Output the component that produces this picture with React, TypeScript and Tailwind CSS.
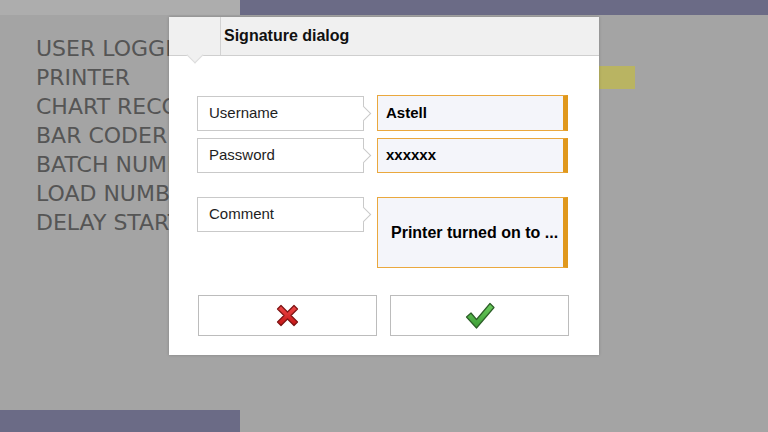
import React from "react";

// --- Background menu rows (partly hidden by the dialog) ---
const MENU_ITEMS = [
  "USER LOGGED IN",
  "PRINTER",
  "CHART RECORDER",
  "BAR CODER",
  "BATCH NUMBER",
  "LOAD NUMBER",
  "DELAY START",
];

function CancelIcon() {
  return (
    <svg width="27" height="27" viewBox="0 0 27 27">
      <defs>
        <linearGradient id="xg" x1="0" y1="0" x2="0" y2="1">
          <stop offset="0" stopColor="#ef4a4a" />
          <stop offset="1" stopColor="#c41414" />
        </linearGradient>
      </defs>
      <path
        d="M3.5 7 L7 3.5 L13.5 10 L20 3.5 L23.5 7 L17 13.5 L23.5 20 L20 23.5 L13.5 17 L7 23.5 L3.5 20 L10 13.5 Z"
        fill="url(#xg)"
        stroke="#7d1212"
        strokeWidth="1.2"
        strokeLinejoin="round"
      />
    </svg>
  );
}

function OkIcon() {
  return (
    <svg width="30" height="28" viewBox="0 0 30 28">
      <defs>
        <linearGradient id="cg" x1="0" y1="0" x2="0" y2="1">
          <stop offset="0" stopColor="#6ccd5e" />
          <stop offset="1" stopColor="#3c9c36" />
        </linearGradient>
      </defs>
      <path
        d="M1.5 15 L6 11 L11.5 17.5 L25 1.5 L29 5.5 L11.5 26 Z"
        fill="url(#cg)"
        stroke="#2c5e28"
        strokeWidth="1.2"
        strokeLinejoin="round"
      />
    </svg>
  );
}

function FieldLabel({ text }: { text: string }) {
  return (
    <div className="relative flex h-[35px] w-[167px] shrink-0 items-center border border-[#c9c9c9] bg-white pl-[11px] text-[15px] text-[#1e1e1e]">
      {text}
      {/* pointer towards the value box */}
      <div className="absolute right-[-6px] top-[11px] h-[11px] w-[11px] rotate-45 border-r border-t border-[#c9c9c9] bg-white" />
    </div>
  );
}

export default function App() {
  return (
    <div
      className="relative flex h-[432px] w-[768px] flex-col overflow-hidden bg-[#a4a4a4]"
      style={{ fontFamily: '"Liberation Sans", Arial, sans-serif' }}
    >
      {/* Top bar */}
      <div className="flex h-[15px] shrink-0">
        <div className="w-[240px] bg-[#adadad]" />
        <div className="flex-1 bg-[#6b6b86]" />
      </div>

      {/* Background list */}
      <div className="flex-1 pl-[36px] pt-[19px]">
        {MENU_ITEMS.map((item) => (
          <div key={item} className="flex h-[29px] items-center">
            <div className="w-[133px] overflow-hidden">
              <span
                className="whitespace-nowrap text-[22px] leading-[29px] text-[#555555]"
                style={{ fontFamily: '"DejaVu Sans", sans-serif' }}
              >
                {item}
              </span>
            </div>
            <div className="w-[430px]" />
            {item === "PRINTER" && <div className="h-[23px] w-[36px] bg-[#b9b462]" />}
          </div>
        ))}
      </div>

      {/* Bottom bar */}
      <div className="h-[22px] w-[240px] shrink-0 bg-[#6b6b86]" />

      {/* Signature dialog */}
      <div className="absolute left-[169px] top-[17px] h-[338px] w-[430px] bg-white shadow-[0_0_3px_rgba(0,0,0,0.2)]">
        <div className="flex h-[39px] border-b border-[#cfcfcf] bg-[#f0f0f0]">
          <div className="relative w-[52px] border-r border-[#d2d2d2]">
            <div className="absolute left-[20px] top-[32px] h-[12px] w-[12px] rotate-45 border-b border-r border-[#dcdcdc] bg-[#f0f0f0]" />
          </div>
          <div className="flex items-center pl-[3px] text-[16px] font-bold text-[#111]">Signature dialog</div>
        </div>

        <div className="px-[28px] pt-[39px]">
          <div className="flex h-[36px] items-start gap-[13px]">
            <div className="pt-[1px]">
              <FieldLabel text="Username" />
            </div>
            <div className="flex h-[36px] w-[191px] items-center border border-r-[5px] border-[#eaa83e] border-r-[#e0981c] bg-[#f4f5fa] pl-[8px] text-[15px] font-bold text-black">
              Astell
            </div>
          </div>

          <div className="mt-[7px] flex items-start gap-[13px]">
            <FieldLabel text="Password" />
            <div className="flex h-[35px] w-[191px] items-center border border-r-[5px] border-[#eaa83e] border-r-[#e0981c] bg-[#f4f5fa] pl-[8px] text-[15px] font-bold text-black">
              xxxxxx
            </div>
          </div>

          <div className="mt-[24px] flex items-start gap-[13px]">
            <FieldLabel text="Comment" />
            <div className="flex h-[71px] w-[191px] items-center border border-r-[5px] border-[#eaa83e] border-r-[#e0981c] bg-[#f4f5fa] pl-[13px] text-[16px] font-bold text-black">
              Printer turned on to ...
            </div>
          </div>

          <div className="mt-[27px] flex gap-[13px] pl-[1px]">
            <button className="flex h-[41px] w-[179px] items-center justify-center border border-[#bcbcbc] bg-white">
              <CancelIcon />
            </button>
            <button className="flex h-[41px] w-[179px] items-center justify-center border border-[#bcbcbc] bg-white">
              <OkIcon />
            </button>
          </div>
        </div>
      </div>
    </div>
  );
}
